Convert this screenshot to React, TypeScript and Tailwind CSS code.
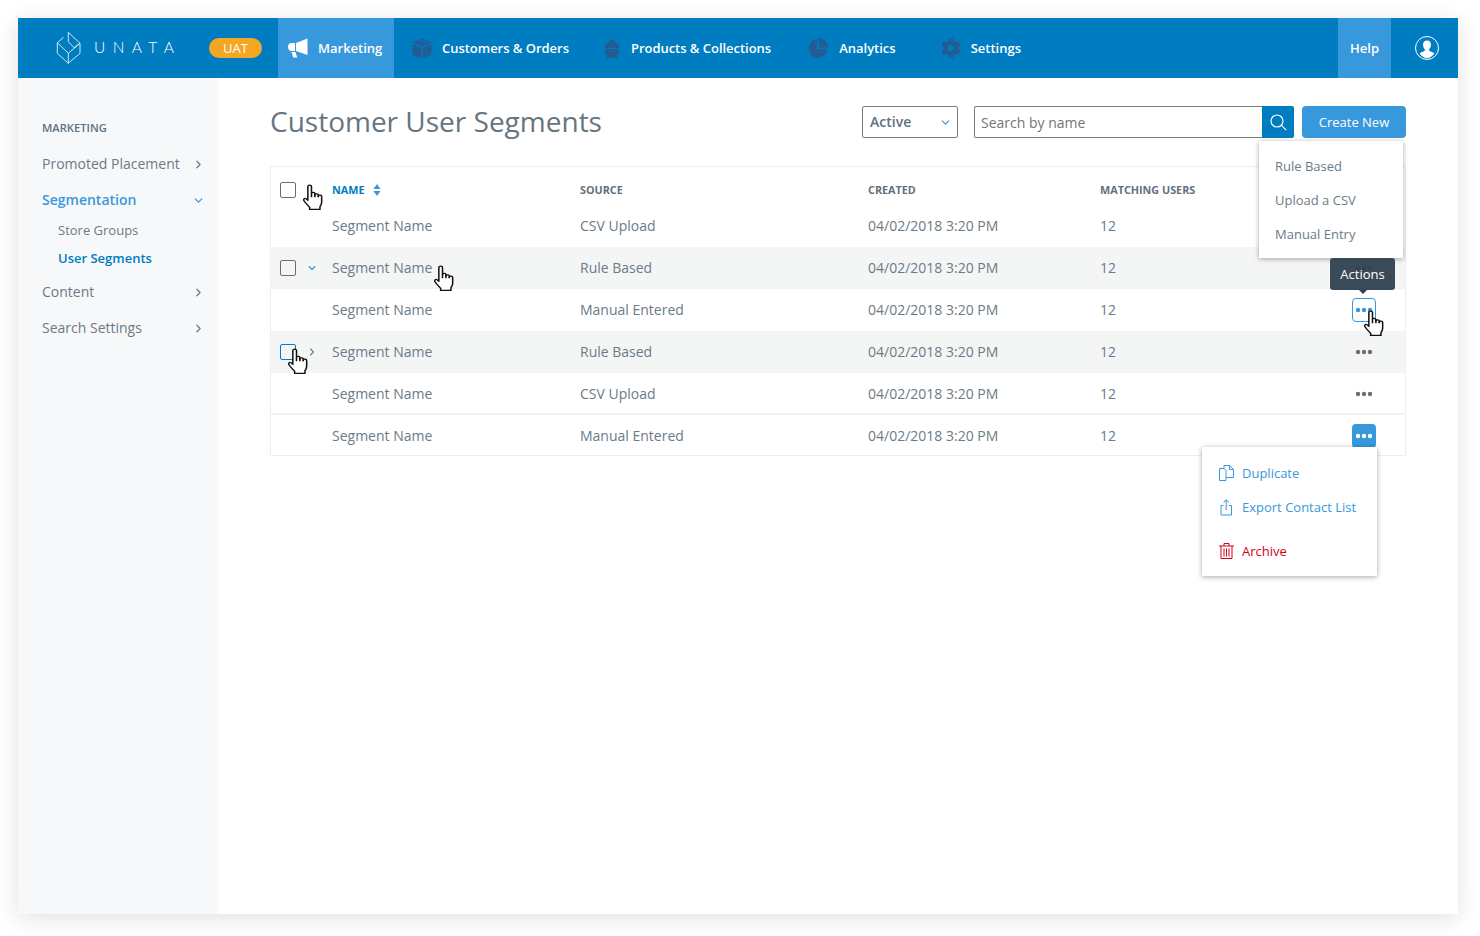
import { ChevronDown, ChevronRight } from "lucide-react"
import { FaCog } from "react-icons/fa"

const navIconColor = "#215c94"

function Logo() {
  return (
    <svg className="shrink-0" width="26" height="34" viewBox="0 0 26 34" fill="none" stroke="#cfe6f5" strokeWidth="1">
      <path d="M1.3 11.7 L12.3 22.3 L24 12.3 V22.3 L12.3 32.3 L1.3 22.3 Z" />
      <path d="M12.3 22.3 V32.3" />
      <path d="M1.3 11.7 L7.5 6.5" />
      <path d="M12.3 1.3 L24 12.3 L18 16.7 L12.3 10.7 Z" />
    </svg>
  )
}

function Megaphone() {
  return (
    <svg width="20" height="20" viewBox="0 0 20 20" fill="#fff">
      <path d="M8 5 L19.5 0.5 V17 L8 13 Z" />
      <path d="M7 5 V13 H3.5 C1.5 13 0 11.5 0 9 C0 6.5 1.5 5 3.5 5 Z" />
      <path d="M3.5 14 H7.5 L9.2 19.5 H5.2 Z" />
    </svg>
  )
}

function BoxIcon() {
  return (
    <svg width="20" height="21" viewBox="0 0 20 21" fill={navIconColor}>
      <path d="M10 0.5 L19.5 4.5 L10 8.5 L0.5 4.5 Z" />
      <path d="M0.5 6 L9.3 9.8 V20.5 L0.5 16.5 Z" />
      <path d="M19.5 6 L10.7 9.8 V20.5 L19.5 16.5 Z" />
      <path d="M6 2.5 L14 6 M8.5 1.5 L16.5 5" stroke="#007dc1" strokeWidth="0.7" fill="none" />
    </svg>
  )
}

function Cupcake() {
  return (
    <svg width="16" height="20" viewBox="0 0 16 20" fill={navIconColor}>
      <path d="M8 0.5 C8.5 2 11 2.5 11.5 4.5 C13.5 5 15 7 15.5 10 H0.5 C1 7 2.5 5 4.5 4.5 C5 2.5 7 2.5 8 0.5 Z" />
      <path d="M0.8 11 H15.2 L13 20 H3 Z" />
    </svg>
  )
}

function PieIcon() {
  return (
    <svg width="20" height="20" viewBox="0 0 20 20" fill={navIconColor}>
      <path d="M9 1 A9.5 9.5 0 1 0 19.5 11 H9 Z" />
      <path d="M10.5 0 A9.5 9.5 0 0 1 20 9.5 H10.5 Z" />
    </svg>
  )
}

function UserIcon() {
  return (
    <svg width="24" height="24" viewBox="0 0 24 24">
      <circle cx="12" cy="12" r="11.5" fill="#007dc1" stroke="#fff" strokeWidth="1" />
      <path
        fill="#fff"
        d="M12 4.5 C9.4 4.5 8 6.4 8 8.8 C8 10.6 8.8 12.2 9.8 13.2 V14.8 C8 15.8 5.8 16.2 4.6 17.6 C6.4 20.2 9 22.3 12 22.3 C15 22.3 17.6 20.2 19.4 17.6 C18.2 16.2 16 15.8 14.2 14.8 V13.2 C15.2 12.2 16 10.6 16 8.8 C16 6.4 14.6 4.5 12 4.5 Z"
      />
    </svg>
  )
}

function Hand({ className }: { className: string }) {
  return (
    <svg
      className={`absolute ${className}`}
      width="20"
      height="26"
      viewBox="1 0 16.5 25.6"
      preserveAspectRatio="none"
      fill="#fff"
      stroke="#111"
      strokeWidth="1.25"
      strokeLinejoin="round"
    >
      <path d="M5 13 V2.5 a1.5 1.5 0 0 1 3 0 V9.5 a1.4 1.4 0 0 1 2.8 .3 V11 a1.4 1.4 0 0 1 2.8 .3 V12.3 a1.4 1.4 0 0 1 2.8 .3 V18 c0 2 -.6 3 -1.4 4.2 V25 H6.5 V23 C5 21 3.5 19.5 1.8 16.5 C.9 15 2.4 13.6 3.6 14.6 L5 16 Z" />
      <path d="M8 9.5 V13 M10.8 10 V13 M13.6 11.3 V13" fill="none" />
    </svg>
  )
}

function Dots({ color }: { color: string }) {
  return (
    <svg width="18" height="6" viewBox="0 0 18 6" fill={color}>
      <circle cx="3" cy="3" r="2.2" />
      <circle cx="9" cy="3" r="2.2" />
      <circle cx="15" cy="3" r="2.2" />
    </svg>
  )
}

function SideItem({ label, open }: { label: string; open?: boolean }) {
  return (
    <div className={`flex h-9 items-center justify-between pr-[13px] pl-6 text-sm ${open ? "font-semibold text-[#3898dc]" : "text-[#6c7a86]"}`}>
      <span>{label}</span>
      {open ? (
        <ChevronDown size={13} strokeWidth={2.2} />
      ) : (
        <ChevronRight size={13} strokeWidth={2.2} />
      )}
    </div>
  )
}

const rows = [
  { source: "CSV Upload", shaded: false, check: null, dots: "plain" },
  { source: "Rule Based", shaded: true, check: "down", dots: "plain" },
  { source: "Manual Entered", shaded: false, check: null, dots: "outline" },
  { source: "Rule Based", shaded: true, check: "right", dots: "plain" },
  { source: "CSV Upload", shaded: false, check: null, dots: "plain" },
  { source: "Manual Entered", shaded: false, check: null, dots: "solid" },
]

const gridCols = "grid grid-cols-[61px_248px_288px_232px_1fr_24px] items-center pr-[29px]"

export default function App() {
  return (
    <div className="min-h-[936px] bg-white py-[18px] pl-[18px] font-['Open_Sans',sans-serif]">
      <div className="flex h-[896px] w-[1440px] flex-col bg-white shadow-[0_4px_22px_rgba(0,0,0,0.12)]">
        {/* top nav */}
        <header className="flex h-[60px] shrink-0 items-center bg-[#007dc1] text-[13px] font-semibold text-white">
          <div className="ml-[38px] flex w-[118px] items-center gap-3">
            <Logo />
            <span className="font-['Lato',sans-serif] text-[15.5px] font-light tracking-[0.48em] whitespace-nowrap">UNATA</span>
          </div>
          <div className="ml-[35px] flex h-5 w-[53px] items-center justify-center rounded-full bg-[#f5a623] pt-px font-medium">UAT</div>
          <div className="ml-4 flex h-full w-[116px] items-center gap-[10px] bg-[#3898dc] pl-[10px]">
            <Megaphone />
            <span className="pt-[2px]">Marketing</span>
          </div>
          <div className="ml-[18px] flex items-center gap-[10px]">
            <BoxIcon />
            <span className="pt-[2px] tracking-[-0.03px]">Customers &amp; Orders</span>
          </div>
          <div className="ml-[35px] flex items-center gap-[11px]">
            <Cupcake />
            <span className="pt-[2px] tracking-[-0.03px]">Products &amp; Collections</span>
          </div>
          <div className="ml-[37px] flex items-center gap-[11px]">
            <PieIcon />
            <span className="pt-[2px]">Analytics</span>
          </div>
          <div className="ml-[45px] flex items-center gap-[10px]">
            <FaCog size={20} color={navIconColor} />
            <span className="pt-[2px]">Settings</span>
          </div>
          <div className="ml-auto flex h-full w-[53px] items-center justify-center bg-[#3898dc] pt-[2px]">Help</div>
          <div className="mr-[19px] ml-6">
            <UserIcon />
          </div>
        </header>

        <div className="flex flex-1">
          {/* sidebar */}
          <aside className="w-[200px] shrink-0 bg-[#f7f8fa] pt-[42px]">
            <div className="pl-6 text-[11.2px] leading-4 font-semibold text-[#5f7180]">MARKETING</div>
            <div className="mt-[10px]">
              <SideItem label="Promoted Placement" />
              <SideItem label="Segmentation" open />
              <div className="-mt-px flex flex-col pb-px pl-10 text-[13px]">
                <div className="flex h-7 items-center text-[#6c7a86]">Store Groups</div>
                <div className="flex h-7 items-center font-semibold text-[#007dc1]">User Segments</div>
              </div>
              <SideItem label="Content" />
              <SideItem label="Search Settings" />
            </div>
          </aside>

          {/* main */}
          <main className="flex-1 pt-7 pr-[52px] pl-[52px]">
            <div className="flex h-8 items-center">
              <h1 className="-mt-[2px] text-[28px] leading-8 font-normal text-[#66757f]">Customer User Segments</h1>
              <div className="ml-auto flex h-8 w-24 items-center justify-between rounded-[2px] border border-[#7d7d7d] pr-[5px] pl-[7px] text-sm font-semibold text-[#5f7180]">
                <span>Active</span>
                <ChevronDown size={13} strokeWidth={2.2} className="text-[#3898dc]" />
              </div>
              <div className="ml-4 flex h-8 w-[320px] items-stretch">
                <input
                  placeholder="Search by name"
                  className="min-w-0 flex-1 rounded-l-[2px] border border-r-0 border-[#7d7d7d] px-[6px] pt-[2px] text-sm placeholder:text-[#757575]"
                />
                <div className="flex w-8 items-center justify-center rounded-r-[2px] bg-[#007dc1]">
                  <svg width="17" height="17" viewBox="0 0 17 17" fill="none" stroke="#fff" strokeWidth="1.2">
                    <circle cx="7" cy="7" r="6" />
                    <path d="M11.4 11.4 L16.2 16.2" />
                  </svg>
                </div>
              </div>
              <div className="ml-2 flex h-8 w-[104px] items-center justify-center rounded bg-[#3898dc] pt-px text-[13px] text-white">Create New</div>
            </div>

            <div className="relative mt-7 h-[290px] border border-[#eceeef] text-sm text-[#6c7a86]">
              {/* head */}
              <div className={`${gridCols} h-[38px] pt-2 text-[10.8px] font-bold text-[#5f7180]`}>
                <div className="pl-[9px]">
                  <div className="h-4 w-4 rounded-[2px] border border-[#6c6c6c]" />
                </div>
                <div className="flex items-center gap-[9px] text-[#007dc1]">
                  <span>NAME</span>
                  <svg width="8" height="12" viewBox="0 0 8 12" fill="#3898dc">
                    <path d="M4 0 L7.5 5 H.5 Z" />
                    <path d="M4 12 L7.5 7 H.5 Z" />
                  </svg>
                </div>
                <div>SOURCE</div>
                <div>CREATED</div>
                <div>MATCHING USERS</div>
              </div>

              {/* rows */}
              {rows.map((row, i) => (
                <div
                  key={i}
                  className={`${gridCols} ${i === 5 ? "h-10 pt-[2px]" : "h-[42px]"} ${row.shaded ? "bg-[#f4f6f6]" : ""} ${i === 1 || i === 4 ? "border-b-2 border-[#f1f3f3] pt-[2px]" : ""}`}
                >
                  <div className="flex items-center pl-[9px]">
                    {row.check && (
                      <div className={`h-4 w-4 rounded-[2px] border ${row.check === "right" ? "border-[#007dc1]" : "border-[#6c6c6c]"}`} />
                    )}
                    {row.check === "down" && <ChevronDown size={12} strokeWidth={2.2} className="ml-[10px] text-[#3898dc]" />}
                    {row.check === "right" && <ChevronRight size={12} strokeWidth={2.2} className="ml-[10px] text-[#6c7a86]" />}
                  </div>
                  <div>Segment Name</div>
                  <div>{row.source}</div>
                  <div>04/02/2018 3:20 PM</div>
                  <div>12</div>
                  <div
                    className={`flex h-6 w-6 items-center justify-center rounded ${row.dots === "solid" ? "bg-[#3898dc]" : ""} ${row.dots === "outline" ? "border border-[#3898dc]" : ""}`}
                  >
                    <Dots color={row.dots === "plain" ? "#6f6f6f" : row.dots === "solid" ? "#fff" : "#3898dc"} />
                  </div>
                </div>
              ))}

              <Hand className="top-[17px] left-[32px]" />
              <Hand className="top-[98px] left-[163px]" />
              <Hand className="top-[181px] left-[17px]" />
              <Hand className="top-[143px] left-[1093px]" />

              {/* create new menu */}
              <div className="absolute top-[-26px] left-[988px] z-10 flex h-[117px] w-[144px] flex-col justify-center gap-3 bg-white pl-4 text-[13px] leading-[22px] shadow-[0_1px_5px_rgba(0,0,0,0.35)]">
                <div>Rule Based</div>
                <div>Upload a CSV</div>
                <div>Manual Entry</div>
              </div>

              {/* tooltip */}
              <div className="absolute top-[91px] left-[1059px] z-20 flex h-8 w-[65px] items-center justify-center rounded-[3px] bg-[#2f4050]/95 text-[13px] font-medium text-white">
                Actions
                <div className="absolute -bottom-[4px] left-1/2 h-0 w-0 -translate-x-1/2 border-x-[4px] border-t-[4px] border-x-transparent border-t-[#2f4050]" />
              </div>

              {/* row actions menu */}
              <div className="absolute top-[280px] left-[931px] z-10 flex h-[129px] w-[175px] flex-col bg-white pt-[15px] pl-[17px] text-[13px] leading-[22px] text-[#3898dc] shadow-[0_1px_5px_rgba(0,0,0,0.35)]">
                <div className="flex h-[22px] items-center gap-2">
                  <svg width="15" height="16" viewBox="0 0 15 16" fill="none" stroke="#3898dc">
                    <path d="M.5 3.5 H5 L7 5.5 V15.5 H.5 Z" />
                    <path d="M5 3.5 V.5 H10.5 L14.5 4.5 V12.5 H7" />
                    <path d="M10.5 .5 V4.5 H14.5" />
                  </svg>
                  <span>Duplicate</span>
                </div>
                <div className="mt-3 flex h-[22px] items-center gap-2">
                  <svg width="15" height="17" viewBox="0 0 15 17" fill="none" stroke="#3898dc">
                    <path d="M4.5 6.5 H2 V16 H12.5 V6.5 H10" />
                    <path d="M7.2 11 V1 M4.5 3.5 L7.2 .8 L10 3.5" />
                  </svg>
                  <span>Export Contact List</span>
                </div>
                <div className="mt-[22px] flex h-[22px] items-center gap-2 text-[#d0021b]">
                  <svg width="15" height="16" viewBox="0 0 15 16" fill="none" stroke="#d0021b">
                    <path d="M0 3 H15 M5 3 V.5 H10 V3" />
                    <path d="M2 3 V15.5 H13 V3" />
                    <path d="M5 5.5 V13.5 M7.5 5.5 V13.5 M10 5.5 V13.5" />
                  </svg>
                  <span>Archive</span>
                </div>
              </div>
            </div>
          </main>
        </div>
      </div>
    </div>
  )
}
